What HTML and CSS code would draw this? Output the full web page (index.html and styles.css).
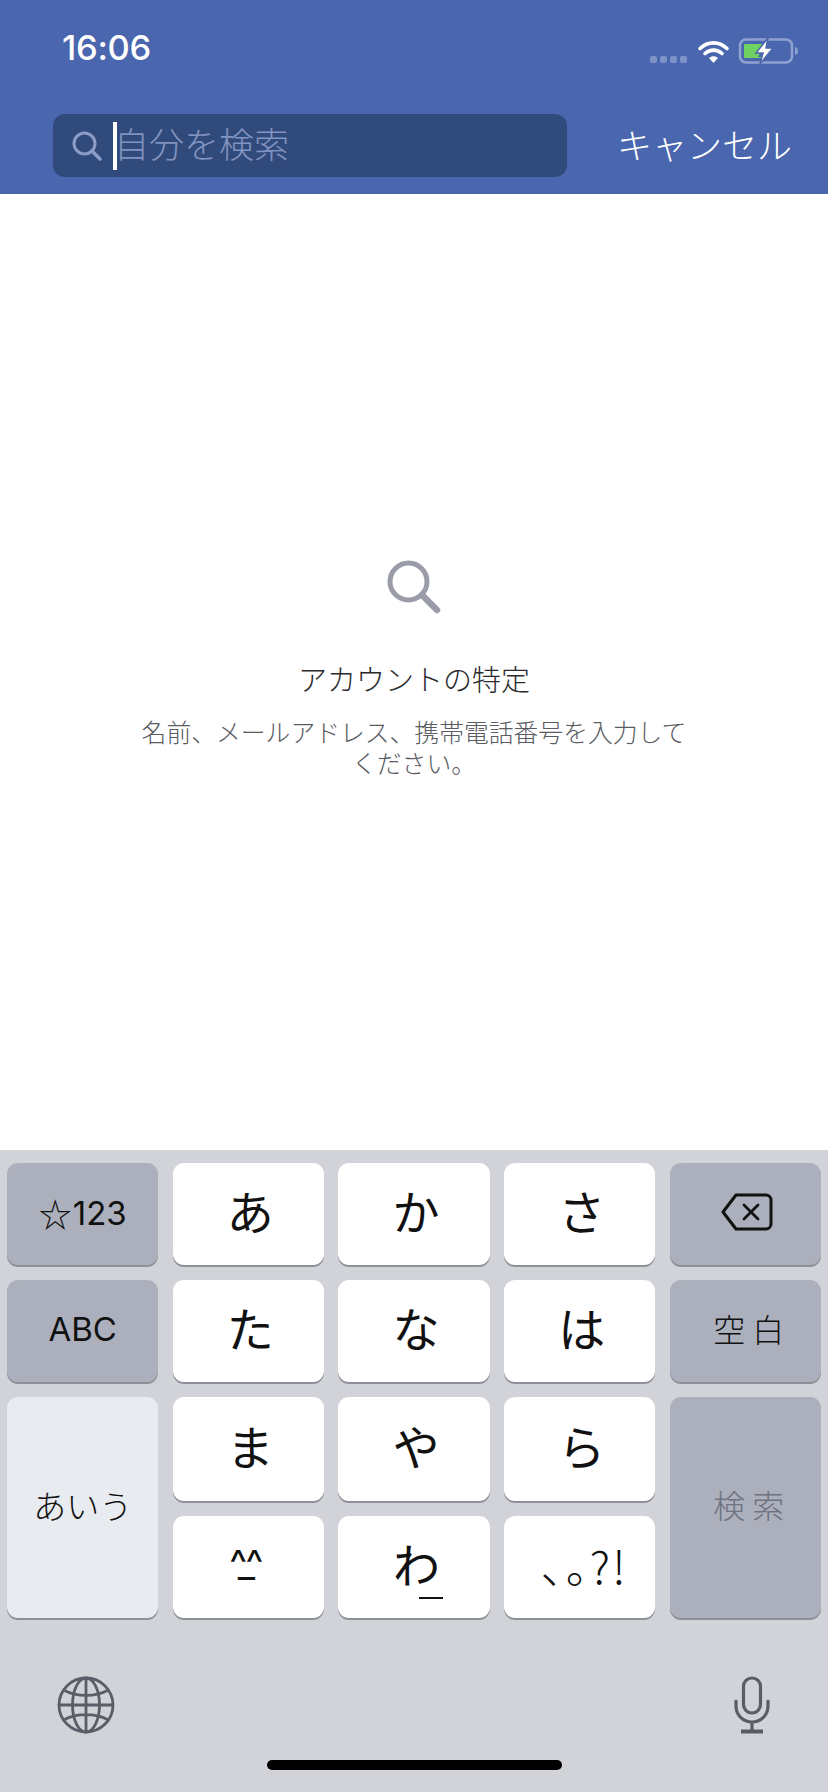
FILE: index.html
```html
<!DOCTYPE html>
<html lang="ja">
<head>
<meta charset="utf-8">
<title>検索</title>
<link rel="stylesheet" href="styles.css">
</head>
<body>
<div class="phone">
  <header class="header">
    <div class="status">
      <span class="time">16:06</span>
      <svg class="status-icons" width="148" height="26" viewBox="0 0 148 26">
        <g fill="#7d93c8"><rect x="0" y="18" width="7" height="7" rx="2"/><rect x="10" y="18" width="7" height="7" rx="2"/><rect x="20" y="18" width="7" height="7" rx="2"/><rect x="30" y="18" width="7" height="7" rx="2"/></g>
        <g fill="none" stroke="#fff" stroke-width="3.6" stroke-linecap="round"><path d="M50 10.5C58 3 69 3 77 10.5"/><path d="M55 15.5C60 11 67 11 72 15.5"/></g>
        <path d="M59 20c3-2.500 6-2.500 9 0l-4.500 5z" fill="#fff"/>
        <rect x="90" y="1.500" width="52" height="23" rx="6" fill="none" stroke="#8ea1d0" stroke-width="2.500"/>
        <path d="M145 9c2 .5 3 2 3 4s-1 3.500-3 4z" fill="#8ea1d0"/>
        <path d="M95 6h20l-7 13h4v1H95a1 1 0 0 1-1-1V7a1 1 0 0 1 1-1z" fill="#6fd263"/>
        <path d="M118 0l-12 15h7l-3 11 13-16h-7z" fill="#fff" stroke="#4a66ae" stroke-width="1.500"/>
      </svg>
    </div>
    <div class="search-row">
      <div class="search-box">
        <svg class="search-icon" width="30" height="30" viewBox="0 0 30 30"><circle cx="12.500" cy="12.500" r="10.500" fill="none" stroke="#8b9cc6" stroke-width="3"/><path d="M20 20l8 8" stroke="#8b9cc6" stroke-width="3.500" stroke-linecap="round"/></svg>
        <span class="caret"></span>
        <span class="placeholder">自分を検索</span>
      </div>
      <span class="cancel">キャンセル</span>
    </div>
  </header>
  <main class="empty">
    <svg class="empty-icon" width="54" height="54" viewBox="0 0 54 54"><circle cx="21.500" cy="21.500" r="18.500" fill="none" stroke="#9a9ca9" stroke-width="5"/><path d="M35 35l15 15" stroke="#9a9ca9" stroke-width="6.500" stroke-linecap="round"/></svg>
    <h1 class="empty-title">アカウントの特定</h1>
    <p class="empty-text">名前、メールアドレス、携帯電話番号を入力してください。</p>
  </main>
  <section class="keyboard">
    <div class="keys">
      <div class="key fn latin numbers"><span class="star">☆</span>123</div>
      <div class="key kana">あ</div>
      <div class="key kana">か</div>
      <div class="key kana">さ</div>
      <div class="key fn backspace"><svg width="52" height="38" viewBox="0 0 52 38"><path d="M15 2h30a5 5 0 0 1 5 5v24a5 5 0 0 1-5 5H15L2 19z" fill="none" stroke="#111" stroke-width="3" stroke-linejoin="round"/><path d="M23 12l14 14M37 12L23 26" stroke="#111" stroke-width="2.800" stroke-linecap="round"/></svg></div>
      <div class="key fn latin abc">ABC</div>
      <div class="key kana">た</div>
      <div class="key kana">な</div>
      <div class="key kana">は</div>
      <div class="key fn label">空白</div>
      <div class="key mode tall label-plain">あいう</div>
      <div class="key kana">ま</div>
      <div class="key kana">や</div>
      <div class="key kana">ら</div>
      <div class="key fn tall label muted">検索</div>
      <div class="key face">^_^</div>
      <div class="key kana wa">わ<span class="wa-line"></span></div>
      <div class="key punct">、。?!</div>
    </div>
    <div class="tools">
      <svg width="58" height="58" viewBox="0 0 58 58" fill="none" stroke="#5b5c68" stroke-width="2.800"><circle cx="29" cy="29" r="27"/><ellipse cx="29" cy="29" rx="13.500" ry="27"/><path d="M29 2v54M2 29h54M7.500 14.500c12 6.500 31 6.500 43 0M7.500 43.500c12-6.500 31-6.500 43 0"/></svg>
      <svg width="36" height="58" viewBox="0 0 36 58" fill="none" stroke="#5b5c68" stroke-width="3.200"><rect x="9.500" y="2" width="17" height="35" rx="8.500"/><path d="M2 25v5c0 9 7 16 16 16s16-7 16-16v-5M18 46v9" stroke-linecap="round"/><path d="M7 55.500h22" stroke-width="4"/></svg>
    </div>
    <div class="home-wrap"><div class="home"></div></div>
  </section>
</div>
</body>
</html>
```

FILE: styles.css
```css
* { box-sizing: border-box; }
html, body { margin: 0; padding: 0; }
body { background: #fff; font-family: "Noto Sans CJK JP", "Inter", sans-serif; color: #111; }
.phone { width: 828px; height: 1792px; display: flex; flex-direction: column; overflow: hidden; }

.header { height: 194px; background: #4a66ae; padding: 0 36px 0 53px; flex: none; }
.status { height: 114px; display: flex; justify-content: space-between; align-items: flex-start; }
.time { font-family: "Inter", sans-serif; font-weight: 500; font-size: 34.500px; line-height: 40px; color: #fff; margin: 28px 0 0 9px; letter-spacing: -0.300px; }
.status-icons { margin: 38px -6px 0 0; }
.search-row { display: flex; align-items: center; justify-content: space-between; }
.search-box { width: 514px; height: 63px; background: #314a7c; border-radius: 12px; display: flex; align-items: center; padding-left: 19px; }
.search-icon { flex: none; }
.caret { width: 4px; height: 48px; background: #fff; margin-left: 11px; flex: none; }
.placeholder { font-size: 35px; line-height: 48px; color: #8193bf; margin: 0 0 6px -3px; font-weight: 300; }
.cancel { font-size: 35px; line-height: 48px; color: #fff; font-weight: 300; white-space: nowrap; margin-bottom: 4px; }

.empty { flex: 1; display: flex; flex-direction: column; align-items: center; padding-top: 366px; background: #fff; }
.empty-icon { flex: none; }
.empty-title { margin: 44px 0 0; font-size: 29px; line-height: 40px; font-weight: 300; color: #2b2b2e; }
.empty-text { margin: 18px 0 0; width: 552px; font-size: 24.800px; line-height: 31px; font-weight: 300; color: #5a5c62; text-align: center; }

.keyboard { height: 642px; background: #d1d3d9; padding-top: 13px; flex: none; }
.keys { display: grid; grid-template-columns: repeat(5, 1fr); grid-template-rows: 102px 102px 104px 102px; gap: 15px 14.250px; padding: 0 7px; }
.key { background: #fff; border-radius: 11px; box-shadow: 0 2px 0 #8e9097; display: flex; align-items: center; justify-content: center; }
.fn { background: #acb0bc; }
.mode { background: #e8ebf0; }
.tall { grid-row: span 2; }
.kana { font-size: 47px; font-weight: 400; line-height: 1; padding: 0 0 9px 4px; }
.latin { font-family: "Inter", "Noto Sans CJK JP", sans-serif; font-size: 33px; font-weight: 400; }
.numbers { padding: 0 0 2px 0; }
.star { font-family: "Noto Sans CJK JP", sans-serif; font-size: 33px; font-weight: 400; margin-right: 1px; }
.abc { padding-bottom: 4px; }
.backspace { padding: 0 0 4px 4px; }
.label, .label-plain { font-size: 32px; font-weight: 300; }
.label { letter-spacing: 7px; padding: 0 0 7px 14px; }
.label-plain { font-size: 33px; padding-bottom: 5px; }
.muted { color: #6f7280; }
.face { font-family: "Inter", sans-serif; font-size: 38px; letter-spacing: -7px; padding: 0 11px 8px 0; }
.wa { position: relative; padding: 0 0 9px 5px; }
.wa-line { position: absolute; left: 81px; bottom: 19px; width: 24px; height: 2px; background: #111; }
.punct { font-size: 45px; font-weight: 300; font-feature-settings: "palt"; letter-spacing: 2px; padding: 0 0 6px 9px; }

.tools { display: flex; justify-content: space-between; align-items: center; padding: 0 58px 0 57px; margin-top: 58px; height: 58px; }
.home-wrap { display: flex; justify-content: center; margin-top: 26px; }
.home { width: 295px; height: 10px; border-radius: 5px; background: #000; }
```
